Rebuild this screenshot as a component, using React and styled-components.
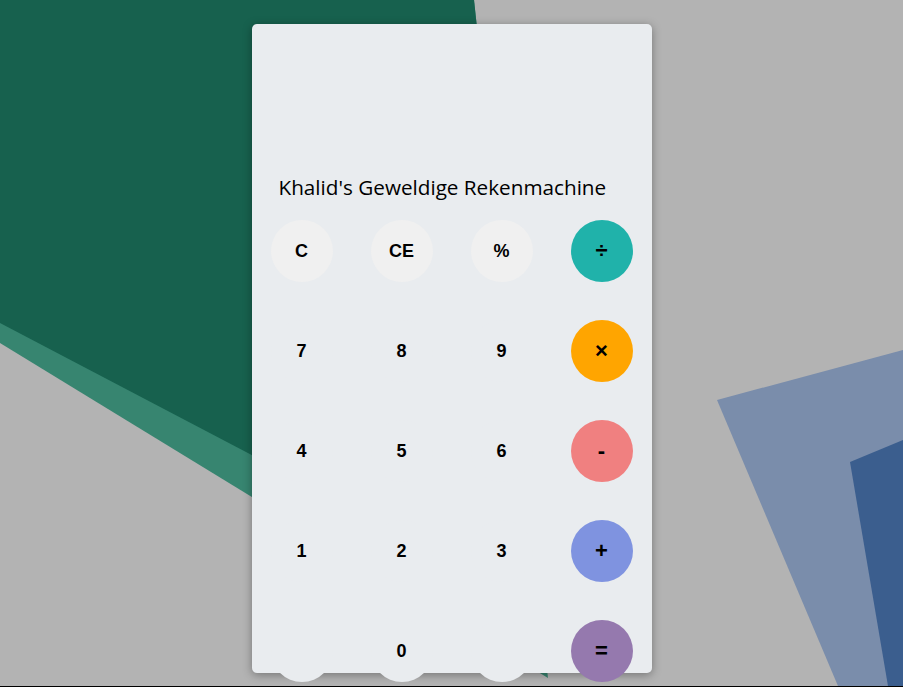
import styled, { createGlobalStyle } from "styled-components";

const GlobalStyle = createGlobalStyle`
  html, body { margin: 0; padding: 0; }
  body { background: #b3b3b3; }
`;

const KEYS = [
  { label: "C", tone: "soft" },
  { label: "CE", tone: "soft" },
  { label: "%", tone: "soft" },
  { label: "÷", tone: "#20b2aa", op: true },
  { label: "7" },
  { label: "8" },
  { label: "9" },
  { label: "×", tone: "#ffa500", op: true },
  { label: "4" },
  { label: "5" },
  { label: "6" },
  { label: "-", tone: "#f08080", op: true },
  { label: "1" },
  { label: "2" },
  { label: "3" },
  { label: "+", tone: "#7f93e0", op: true },
  { label: "" },
  { label: "0" },
  { label: "" },
  { label: "=", tone: "#9579ae", op: true },
];

/* ─── Layout ────────────────────────────────────────────────── */

const Page = styled.div`
  position: relative;
  height: 686px;
  overflow: hidden;
  background: #b3b3b3;
  border-bottom: 1px solid #000;
`;

const Backdrop = styled.svg`
  position: absolute;
  inset: 0;
  width: 100%;
  height: 100%;
  z-index: 0;
`;

const Card = styled.div`
  position: relative;
  z-index: 1;
  width: 400px;
  height: 649px;
  margin: 24px auto 0;
  background: #e9ecef;
  border-radius: 5px;
  box-shadow: 0 2px 10px rgba(0, 0, 0, 0.35);
  display: flex;
  flex-direction: column;
`;

const Display = styled.div`
  height: 149px;
  flex-shrink: 0;
`;

const Title = styled.h1`
  margin: 0;
  padding-left: 27px;
  font-family: "Open Sans", sans-serif;
  font-size: 20.7px;
  font-weight: 400;
  line-height: 28px;
  color: #000;
  flex-shrink: 0;
`;

const Keypad = styled.div`
  display: grid;
  grid-template-columns: repeat(4, 100px);
  grid-auto-rows: 100px;
  flex-shrink: 0;
`;

const Cell = styled.div`
  display: flex;
  align-items: center;
  justify-content: center;
`;

const Key = styled.button`
  width: 62px;
  height: 62px;
  border: none;
  border-radius: 50%;
  padding: 0;
  background: ${({ $tone }) =>
    !$tone ? "#e9ecef" : $tone === "soft" ? "#f0f0f0" : $tone};
  font-family: "Liberation Sans", Arial, sans-serif;
  font-size: ${({ $op }) => ($op ? "22px" : "18px")};
  font-weight: 700;
  color: #000;
  cursor: pointer;
`;

/* ─── Component ─────────────────────────────────────────────── */

export default function App() {
  return (
    <>
      <GlobalStyle />
      <Page>
        <Backdrop viewBox="0 0 903 686" preserveAspectRatio="none">
          <polygon points="0,0 474,0 548,678 0,343" fill="#378570" />
          <polygon points="0,0 474,0 538,605 0,323" fill="#17614e" />
          <polygon points="717,400 903,350 903,686 838,686" fill="#7a8dab" />
          <polygon points="850,462 903,440 903,686 888,686" fill="#3b5e8e" />
        </Backdrop>
        <Card>
          <Display />
          <Title>Khalid's Geweldige Rekenmachine</Title>
          <Keypad>
            {KEYS.map((k, i) => (
              <Cell key={i}>
                <Key $tone={k.tone} $op={k.op}>{k.label}</Key>
              </Cell>
            ))}
          </Keypad>
        </Card>
      </Page>
    </>
  );
}
